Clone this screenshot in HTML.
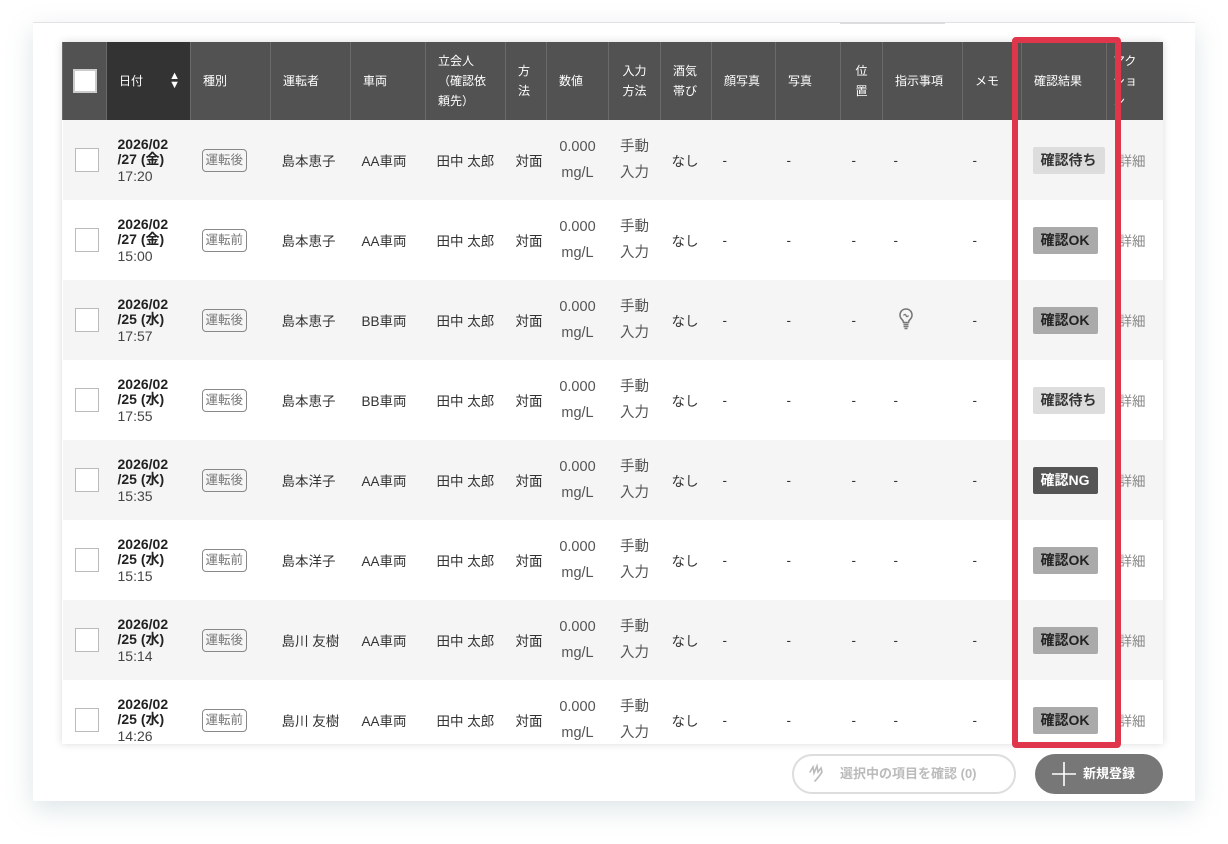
<!DOCTYPE html>
<html><head><meta charset="utf-8"><style>
*{box-sizing:border-box;margin:0;padding:0}
body{width:1228px;height:844px;background:#fff;font-family:"Liberation Sans","Noto Sans CJK JP",sans-serif;position:relative;overflow:hidden;color:#333}
.card{position:absolute;left:33px;top:22px;width:1162px;height:779px;background:#fff;border-top:1px solid #e2e2e2;box-shadow:0 8px 24px rgba(120,150,160,.25)}
.tab{position:absolute;left:840px;top:22px;width:105px;height:2px;background:#ddd}
.wrap{position:absolute;left:62px;top:42px;width:1101px;height:702px;overflow:hidden;box-shadow:0 0 8px rgba(0,0,0,.15)}
table{border-collapse:collapse;table-layout:fixed;width:1101px}
th{background:#525252;color:#fff;font-size:12px;font-weight:normal;height:78px;text-align:left;padding:0 10px 0 12px;border-left:1px solid #6a6a6a;line-height:20px}
th.c{text-align:center;padding:0 6px}
th.d{background:#333}
td{height:80px;font-size:13.5px;padding:0 0 0 11px;color:#333;text-align:left;white-space:nowrap;overflow:visible}
td.m{padding-left:10px}
tr:nth-child(even) td{background:#f5f5f5}
tr:nth-child(odd) td{background:#fff}
.cb{width:24px;height:24px;border:1px solid #bbb;background:#fff;margin-left:1px}
th .cb{border:2px solid #ccc;margin-left:-2px}
.dt{font-size:14px;line-height:15px}
.dt b{font-weight:bold;color:#222}
.dt span{color:#444;display:block;margin-top:2px}
.tag{display:inline-block;border:1px solid #888;border-radius:4px;color:#777;font-size:12.5px;padding:2px 3px;line-height:17px}
.num{text-align:center;line-height:26px;color:#555;font-size:14.5px;padding:0 2px}
.badge{display:inline-block;font-size:14px;font-weight:bold;padding:5px 8px;border-radius:2px;line-height:17px}
.w{background:#ddd;color:#333}.ok{background:#aaa;color:#222}.ng{background:#555;color:#fff}
.det{color:#888;padding-left:12px}
.red{position:absolute;left:1012px;top:37px;width:109px;height:711px;border:6px solid #e0364c;border-radius:4px}
.b1{position:absolute;left:792px;top:754px;width:224px;height:40px;border:2px solid #ddd;border-radius:20px;color:#bbb;font-size:13px;font-weight:bold;padding-left:46px;line-height:36px}
.b2{position:absolute;left:1035px;top:754px;width:128px;height:40px;background:#777;border-radius:20px;color:#fff;font-size:13px;font-weight:bold;padding-left:48px;line-height:40px}
</style></head><body>
<div class="card"></div><div class="tab"></div>
<div class="wrap"><table>
<colgroup><col style="width:44px"><col style="width:84px"><col style="width:80px"><col style="width:80px"><col style="width:75px"><col style="width:80px"><col style="width:41px"><col style="width:62px"><col style="width:52px"><col style="width:51px"><col style="width:64px"><col style="width:65px"><col style="width:42px"><col style="width:80px"><col style="width:59px"><col style="width:85px"><col style="width:57px"></colgroup>
<tr><th><div class="cb"></div></th><th class="d">日付 <span style="float:right;font-size:11px;line-height:9px;margin-top:1px">▲<br>▼</span></th><th>種別</th><th>運転者</th><th>車両</th><th>立会人<br>（確認依<br>頼先）</th><th>方<br>法</th><th>数値</th><th class="c">入力<br>方法</th><th>酒気<br>帯び</th><th>顔写真</th><th>写真</th><th class="c">位<br>置</th><th>指示事項</th><th>メモ</th><th>確認結果</th><th style="padding-left:6px">アク<br>ショ<br>ン</th></tr>
<tr><td><div class="cb"></div></td><td class="dt"><b>2026/02<br>/27 (金)</b><span>17:20</span></td><td><span class="tag">運転後</span></td><td>島本恵子</td><td>AA車両</td><td>田中 太郎</td><td class="m">対面</td><td class="num">0.000<br>mg/L</td><td class="num">手動<br>入力</td><td>なし</td><td>-</td><td>-</td><td>-</td><td>-</td><td style="padding-left:10px">-</td><td style="padding-left:11px"><span class="badge w">確認待ち</span></td><td class="det">詳細</td></tr>
<tr><td><div class="cb"></div></td><td class="dt"><b>2026/02<br>/27 (金)</b><span>15:00</span></td><td><span class="tag">運転前</span></td><td>島本恵子</td><td>AA車両</td><td>田中 太郎</td><td class="m">対面</td><td class="num">0.000<br>mg/L</td><td class="num">手動<br>入力</td><td>なし</td><td>-</td><td>-</td><td>-</td><td>-</td><td style="padding-left:10px">-</td><td style="padding-left:11px"><span class="badge ok">確認OK</span></td><td class="det">詳細</td></tr>
<tr><td><div class="cb"></div></td><td class="dt"><b>2026/02<br>/25 (水)</b><span>17:57</span></td><td><span class="tag">運転後</span></td><td>島本恵子</td><td>BB車両</td><td>田中 太郎</td><td class="m">対面</td><td class="num">0.000<br>mg/L</td><td class="num">手動<br>入力</td><td>なし</td><td>-</td><td>-</td><td>-</td><td><svg width="20" height="24" viewBox="0 0 20 24" style="margin-left:2px"><path d="M10 2a6 6 0 0 0-4 10.5c1 1 1.5 2 1.5 3h5c0-1 .5-2 1.5-3A6 6 0 0 0 10 2z" fill="none" stroke="#777" stroke-width="1.6"/><path d="M7.5 8.5c1-1.5 2-1.5 2.5 0s1.5 1.5 2.5 0" fill="none" stroke="#777" stroke-width="1.3"/><path d="M7.5 17.5h5M7.5 19.5h5M8.5 21.5h3" stroke="#777" stroke-width="1.4"/></svg></td><td style="padding-left:10px">-</td><td style="padding-left:11px"><span class="badge ok">確認OK</span></td><td class="det">詳細</td></tr>
<tr><td><div class="cb"></div></td><td class="dt"><b>2026/02<br>/25 (水)</b><span>17:55</span></td><td><span class="tag">運転後</span></td><td>島本恵子</td><td>BB車両</td><td>田中 太郎</td><td class="m">対面</td><td class="num">0.000<br>mg/L</td><td class="num">手動<br>入力</td><td>なし</td><td>-</td><td>-</td><td>-</td><td>-</td><td style="padding-left:10px">-</td><td style="padding-left:11px"><span class="badge w">確認待ち</span></td><td class="det">詳細</td></tr>
<tr><td><div class="cb"></div></td><td class="dt"><b>2026/02<br>/25 (水)</b><span>15:35</span></td><td><span class="tag">運転後</span></td><td>島本洋子</td><td>AA車両</td><td>田中 太郎</td><td class="m">対面</td><td class="num">0.000<br>mg/L</td><td class="num">手動<br>入力</td><td>なし</td><td>-</td><td>-</td><td>-</td><td>-</td><td style="padding-left:10px">-</td><td style="padding-left:11px"><span class="badge ng">確認NG</span></td><td class="det">詳細</td></tr>
<tr><td><div class="cb"></div></td><td class="dt"><b>2026/02<br>/25 (水)</b><span>15:15</span></td><td><span class="tag">運転前</span></td><td>島本洋子</td><td>AA車両</td><td>田中 太郎</td><td class="m">対面</td><td class="num">0.000<br>mg/L</td><td class="num">手動<br>入力</td><td>なし</td><td>-</td><td>-</td><td>-</td><td>-</td><td style="padding-left:10px">-</td><td style="padding-left:11px"><span class="badge ok">確認OK</span></td><td class="det">詳細</td></tr>
<tr><td><div class="cb"></div></td><td class="dt"><b>2026/02<br>/25 (水)</b><span>15:14</span></td><td><span class="tag">運転後</span></td><td>島川 友樹</td><td>AA車両</td><td>田中 太郎</td><td class="m">対面</td><td class="num">0.000<br>mg/L</td><td class="num">手動<br>入力</td><td>なし</td><td>-</td><td>-</td><td>-</td><td>-</td><td style="padding-left:10px">-</td><td style="padding-left:11px"><span class="badge ok">確認OK</span></td><td class="det">詳細</td></tr>
<tr><td><div class="cb"></div></td><td class="dt"><b>2026/02<br>/25 (水)</b><span>14:26</span></td><td><span class="tag">運転前</span></td><td>島川 友樹</td><td>AA車両</td><td>田中 太郎</td><td class="m">対面</td><td class="num">0.000<br>mg/L</td><td class="num">手動<br>入力</td><td>なし</td><td>-</td><td>-</td><td>-</td><td>-</td><td style="padding-left:10px">-</td><td style="padding-left:11px"><span class="badge ok">確認OK</span></td><td class="det">詳細</td></tr>
</table></div>
<div class="red"></div>
<div class="b1"><svg width="22" height="24" viewBox="0 0 22 24" style="position:absolute;left:14px;top:6px"><path d="M2 10l3-5 1 6 3-7 1 6 3-4 1 4c-2 3-4 6-7 9" fill="none" stroke="#bbb" stroke-width="1.6" stroke-linecap="round"/></svg>選択中の項目を確認 (0)</div>
<div class="b2"><svg width="26" height="26" viewBox="0 0 26 26" style="position:absolute;left:16px;top:7px"><path d="M13 1v24M1 13h24" stroke="#fff" stroke-width="1.6"/></svg>新規登録</div>
</body></html>
